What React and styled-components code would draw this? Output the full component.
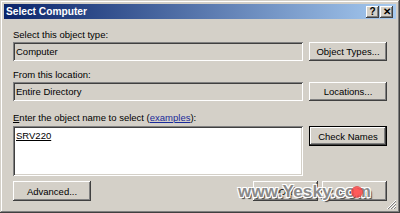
import React from 'react';
import styled, { createGlobalStyle } from 'styled-components';

const GlobalStyle = createGlobalStyle`
  html, body {
    margin: 0;
    padding: 0;
    background: #d4d0c8;
  }
  * {
    box-sizing: border-box;
  }
`;

const Window = styled.div`
  position: relative;
  width: 400px;
  height: 213px;
  padding: 4px;
  background: #d4d0c8;
  font-family: 'Liberation Sans', Arial, sans-serif;
  font-size: 9.5px;
  color: #000;
  box-shadow: inset -1px -1px #404040, inset 1px 1px #d4d0c8,
    inset -2px -2px #808080, inset 2px 2px #fff;
  display: flex;
  flex-direction: column;
`;

const TitleBar = styled.div`
  height: 15px;
  display: flex;
  align-items: center;
  justify-content: space-between;
  padding: 0 3px 0 2px;
  background: linear-gradient(to right, #0a246a, #a6caf0);
`;

const TitleText = styled.div`
  color: #fff;
  font-weight: bold;
  font-size: 10.2px;
`;

const CaptionButtons = styled.div`
  display: flex;
  gap: 1px;
`;

const CaptionButton = styled.div`
  width: 13px;
  height: 12px;
  background: #d4d0c8;
  box-shadow: inset -1px -1px #404040, inset 1px 1px #fff,
    inset -2px -2px #808080;
  display: flex;
  align-items: center;
  justify-content: center;
  font-weight: bold;
  font-size: 10px;
  line-height: 1;
`;

const Body = styled.div`
  flex: 1;
  padding: 9px 9px 0 9px;
  display: flex;
  flex-direction: column;
`;

const Label = styled.div`
  height: 13px;
  line-height: 13px;
  margin-top: ${p => p.$top || 0}px;
  margin-bottom: ${p => p.$bottom || 0}px;
  white-space: nowrap;
`;

const Row = styled.div`
  display: grid;
  grid-template-columns: 290px 1fr;
  column-gap: 6px;
  align-items: start;
`;

const Field = styled.div`
  height: ${p => p.$height || 19}px;
  padding: 3px 3px;
  line-height: 13px;
  background: ${p => (p.$white ? '#fff' : '#d4d0c8')};
  box-shadow: inset 1px 1px #808080, inset -1px -1px #fff,
    inset 2px 2px #404040, inset -2px -2px #d4d0c8;
`;

const Underline = styled.span`
  text-decoration: underline;
`;

const Link = styled.span`
  color: #1a2a9a;
  text-decoration: underline;
`;

const Button = styled.div`
  height: ${p => p.$height || 19}px;
  width: ${p => (p.$width ? `${p.$width}px` : 'auto')};
  display: flex;
  align-items: center;
  justify-content: center;
  background: #d4d0c8;
  white-space: nowrap;
  box-shadow: ${p =>
    p.$default
      ? 'inset 1px 1px #000, inset -1px -1px #000, inset -2px -2px #404040, inset 2px 2px #fff, inset -3px -3px #808080'
      : 'inset -1px -1px #404040, inset 1px 1px #fff, inset -2px -2px #808080'};
`;

const Footer = styled.div`
  margin-top: 5px;
  display: flex;
  align-items: center;
`;

const FooterRight = styled.div`
  margin-left: auto;
  display: flex;
  gap: 4px;
`;

const Grip = styled.svg`
  position: absolute;
  right: 3px;
  bottom: 3px;
`;

const Watermark = styled.div`
  position: absolute;
  left: 238px;
  top: 182px;
  font-family: 'Liberation Sans', Arial, sans-serif;
  font-weight: bold;
  font-size: 17px;
  letter-spacing: 0.2px;
  color: #8a8a8a;
  text-shadow: -1px -1px 0 #fff, 1px -1px 0 #fff, -1px 1px 0 #fff,
    1px 1px 0 #fff, 2px 2px 1px #444;
  white-space: nowrap;
`;

const RedDot = styled.span`
  position: absolute;
  left: 113px;
  top: 4px;
  width: 12px;
  height: 12px;
  border-radius: 50%;
  background: radial-gradient(circle, #ff5a5a 30%, rgba(230, 40, 40, 0.7) 68%, transparent 74%);
`;

export default function App() {
  return (
    <>
      <GlobalStyle />
      <Window>
        <TitleBar>
          <TitleText>Select Computer</TitleText>
          <CaptionButtons>
            <CaptionButton>?</CaptionButton>
            <CaptionButton>✕</CaptionButton>
          </CaptionButtons>
        </TitleBar>
        <Body>
          <Label $bottom={1}>Select this object type:</Label>
          <Row>
            <Field>Computer</Field>
            <Button>Object Types...</Button>
          </Row>
          <Label $top={7} $bottom={1}>From this location:</Label>
          <Row>
            <Field>Entire Directory</Field>
            <Button>Locations...</Button>
          </Row>
          <Label $top={10} $bottom={2}>
            <Underline>E</Underline>nter the object name to select (
            <Link>examples</Link>):
          </Label>
          <Row>
            <Field $white $height={50}>
              <Underline>SRV220</Underline>
            </Field>
            <Button $default $height={20}>Check Names</Button>
          </Row>
          <Footer>
            <Button $width={78} $height={20}>Advanced...</Button>
            <FooterRight>
              <Button $width={65} $height={20}>OK</Button>
              <Button $width={65} $height={20}>Cancel</Button>
            </FooterRight>
          </Footer>
        </Body>
        <Grip width="11" height="11" viewBox="0 0 11 11">
          <path d="M10 1 L1 10 M10 4 L4 10 M10 7 L7 10" stroke="#fff" strokeWidth="1" />
          <path d="M10 2 L2 10 M10 5 L5 10 M10 8 L8 10" stroke="#808080" strokeWidth="1" />
        </Grip>
        <Watermark>
          www.Yesky.com
          <RedDot />
        </Watermark>
      </Window>
    </>
  );
}
